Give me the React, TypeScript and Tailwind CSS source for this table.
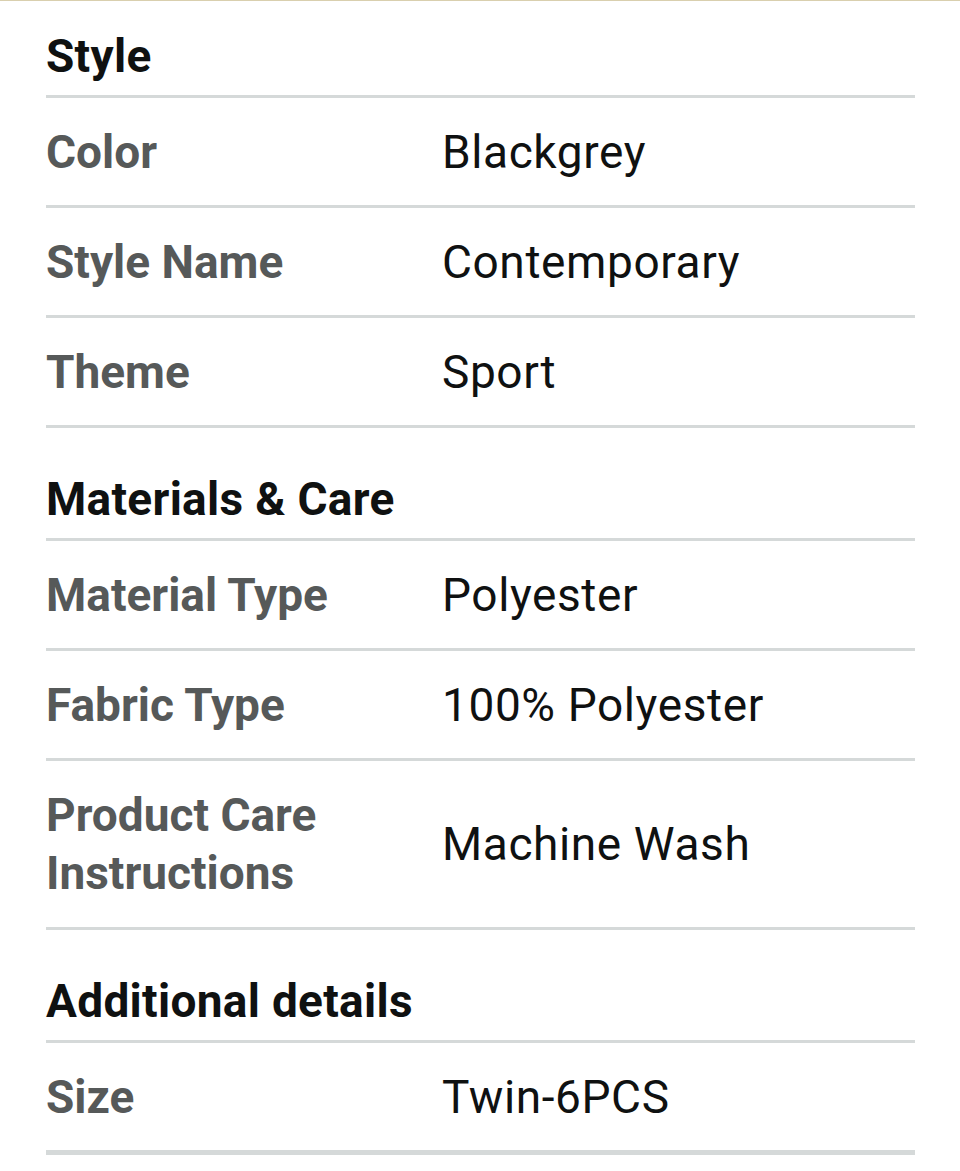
import React from "react";

type Row = { label: string; value: string };
type Section = { title: string; rows: Row[] };

const sections: Section[] = [
  {
    title: "Style",
    rows: [
      { label: "Color", value: "Blackgrey" },
      { label: "Style Name", value: "Contemporary" },
      { label: "Theme", value: "Sport" },
    ],
  },
  {
    title: "Materials & Care",
    rows: [
      { label: "Material Type", value: "Polyester" },
      { label: "Fabric Type", value: "100% Polyester" },
      { label: "Product Care Instructions", value: "Machine Wash" },
    ],
  },
  {
    title: "Additional details",
    rows: [{ label: "Size", value: "Twin-6PCS" }],
  },
];

export default function App() {
  return (
    <div
      className="min-h-[1171px] bg-white border-t border-[#d9cfae] text-[46px] leading-[58px] text-[#0f1111]"
      style={{ fontFamily: "Roboto, 'Liberation Sans', sans-serif" }}
    >
      <div className="pl-[46px] pr-[45px]">
        {sections.map((section, si) => (
          <div key={section.title}>
            {/* section heading */}
            <div
              className={
                (si === 0 ? "pt-[26px] " : "pt-[42px] ") +
                "pb-[10px] border-b-[3px] border-[#d5d9d9]"
              }
            >
              <h2 className="font-bold tracking-[0.3px] text-[#0f1111]">
                {section.title}
              </h2>
            </div>

            {section.rows.map((row, ri) => {
              const last =
                si === sections.length - 1 && ri === section.rows.length - 1;
              const twoLines = row.label === "Product Care Instructions";
              return (
                <div
                  key={row.label}
                  className={
                    "grid grid-cols-[396px_1fr] items-center pt-[25px] border-[#d5d9d9] " +
                    (twoLines ? "pb-[25px] " : "pb-[24px] ") +
                    (last ? "border-b-[5px]" : "border-b-[3px]")
                  }
                >
                  <div className="font-bold text-[#565959] pr-6">
                    {twoLines ? (
                      <>
                        Product Care
                        <br />
                        Instructions
                      </>
                    ) : (
                      row.label
                    )}
                  </div>
                  <div className="tracking-[0.6px] text-[#0f1111]">
                    {row.value}
                  </div>
                </div>
              );
            })}
          </div>
        ))}
      </div>
    </div>
  );
}
